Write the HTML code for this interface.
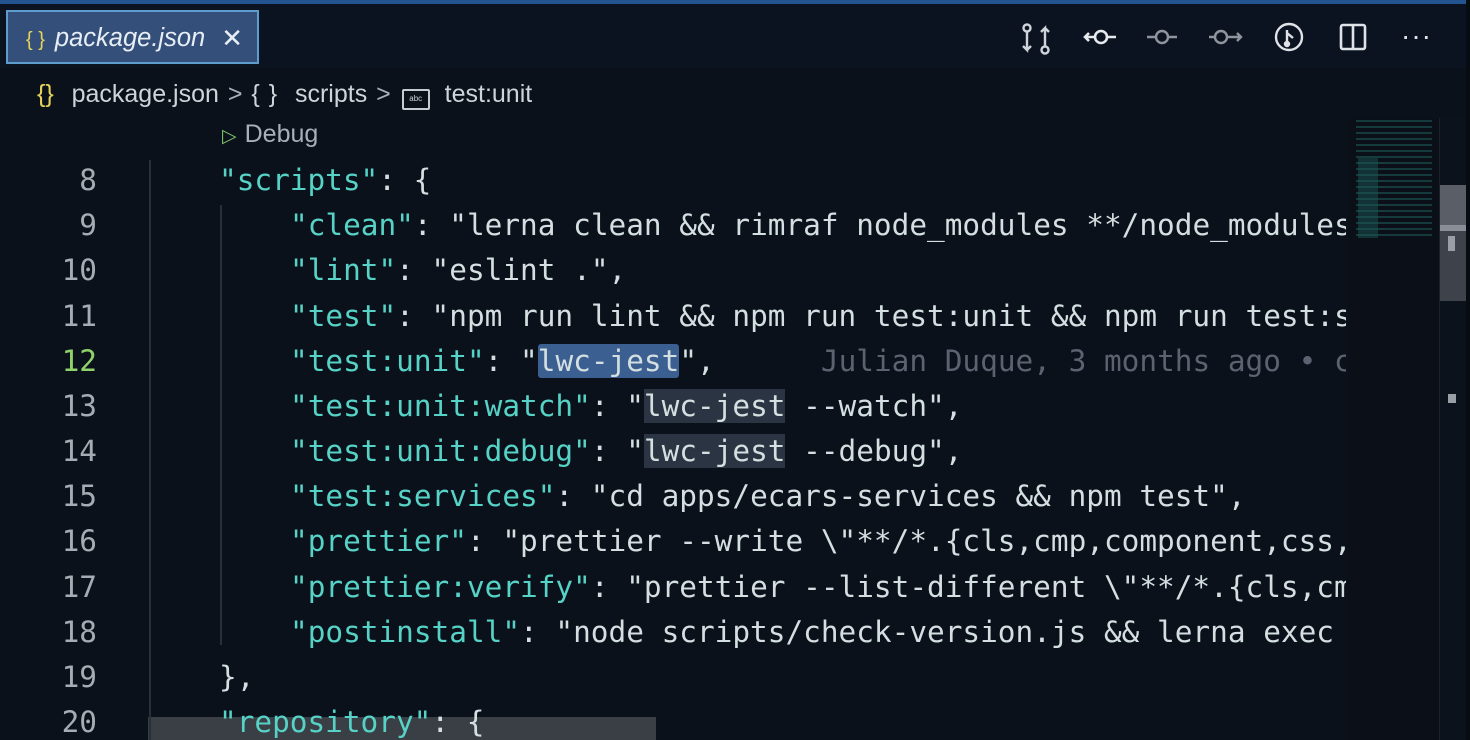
<!DOCTYPE html>
<html><head><meta charset="utf-8"><style>
*{margin:0;padding:0;box-sizing:border-box}
html,body{width:1470px;height:740px;overflow:hidden;background:#0b111b}
body{position:relative;font-family:"Liberation Sans",sans-serif}
.top{position:absolute;left:0;top:0;width:1470px;height:4px;background:#24548f}
.tabbar{position:absolute;left:0;top:4px;width:1470px;height:64px;background:#0c1320}
.tab{position:absolute;left:6px;top:10px;width:253px;height:54px;background:#34507a;border:2px solid #5d9ccc;color:#e8eef5;font-size:25.5px;font-style:italic;line-height:52px;padding-left:18px}
.tab .b{color:#e6d35a;font-style:normal;font-size:20px;margin-right:10px}
.tab .x{position:absolute;right:14px;top:0;font-style:normal;font-size:26px}
.crumb{position:absolute;left:0;top:68px;width:1470px;height:50px;background:#0b111b;color:#cfd4da;font-size:25px;line-height:52px;padding-left:37px;white-space:nowrap;word-spacing:2px}
.crumb .b{color:#e6d35a}
.crumb .g{color:#aab0b8}
.abc{display:inline-block;width:28px;height:21px;border:2px solid #c8ccd2;border-radius:2px;font-size:8px;line-height:16px;text-align:center;vertical-align:1px;margin:0 6px 0 2px}
.debug{position:absolute;left:222px;top:120px;color:#a8afb8;font-size:25px}
.debug span{color:#7cc46a;font-size:19px;margin-right:8px}
.clip{position:absolute;left:0;top:158px;width:1346px;height:582px;overflow:hidden}
.code{position:absolute;left:0;top:0;font-family:"DejaVu Sans Mono","Liberation Mono",monospace;font-size:29.4px;white-space:pre;color:#d3dfe0}
.ln{position:absolute;left:0;width:97px;text-align:right;color:#a6acb3;height:45.17px;line-height:45.17px}
.cl{position:absolute;left:219px;height:45.17px;line-height:45.17px}
.k{color:#56d3c6}
.sel{background:#3c5f92;border-radius:3px}
.hl{background:#2b3442}
.blame{color:#5c6370}
.guide{position:absolute;width:2px;background:#2a303a}
.mini{position:absolute;left:1348px;top:118px;width:92px;height:622px;background:#0a0f18}
.sb{position:absolute;left:1439px;top:118px;width:27px;height:622px;background:#0c121c;border-left:1px solid #1b212b}
.hs{position:absolute;left:148px;top:559px;width:508px;height:23px;background:#3a3e45}
.ico{position:absolute;top:22px}
</style></head><body>
<div class="top"></div>
<div class="tabbar"></div>
<div class="tab"><span class="b">{ }</span>package.json<span class="x">✕</span></div>
<svg class="ico" style="left:1018px" width="36" height="34" viewBox="0 0 36 34" fill="none" stroke="#cfd4da" stroke-width="2.4"><circle cx="9" cy="6" r="3.5"/><circle cx="27" cy="28" r="3.5"/><path d="M9 10v18l-4-4M9 28l4-4M27 24V6l-4 4M27 6l4 4"/></svg>
<svg class="ico" style="left:1082px" width="36" height="32" viewBox="0 0 36 32" fill="none" stroke="#e6eaee" stroke-width="2.6"><circle cx="19" cy="15" r="6"/><path d="M25 15h9M13 15H3M7 11l-4 4 4 4"/></svg>
<svg class="ico" style="left:1146px" width="32" height="32" viewBox="0 0 32 32" fill="none" stroke="#8f959d" stroke-width="2.4"><circle cx="16" cy="15" r="6"/><path d="M22 15h9M10 15H1"/></svg>
<svg class="ico" style="left:1208px" width="36" height="32" viewBox="0 0 36 32" fill="none" stroke="#8f959d" stroke-width="2.4"><circle cx="13" cy="15" r="6"/><path d="M7 15H1M19 15h14M29 11l4 4-4 4"/></svg>
<svg class="ico" style="left:1273px" width="32" height="32" viewBox="0 0 32 32" fill="none" stroke="#dfe3e8" stroke-width="2.4"><circle cx="16" cy="15" r="13"/><path d="M14 8v16M14 11l6 5"/><circle cx="14" cy="22" r="2" fill="#dfe3e8"/></svg>
<svg class="ico" style="left:1339px" width="28" height="32" viewBox="0 0 28 32" fill="none" stroke="#dfe3e8" stroke-width="2.6"><rect x="2" y="3" width="24" height="24" rx="2"/><path d="M14 3v24"/></svg>
<div style="position:absolute;left:1401px;top:20px;color:#dfe3e8;font-size:28px;letter-spacing:1px">···</div>
<div class="crumb"><span class="b">{}</span>&nbsp; package.json <span class="g">&gt;</span> { }&nbsp; scripts <span class="g">&gt;</span> <span class="abc">abc</span> test:unit</div>
<div class="debug"><span>▷</span>Debug</div>
<div class="clip">
<div class="hs"></div>
<div class="guide" style="left:149px;top:2px;height:580px"></div>
<div class="guide" style="left:220px;top:47px;height:440px"></div>
<div class="code">
<div class="ln" style="top:0">8</div><div class="cl" style="top:0"><span class="k">"scripts"</span>: {</div>
<div class="ln" style="top:45.17px">9</div><div class="cl" style="top:45.17px;left:290px"><span class="k">"clean"</span>: "lerna clean &amp;&amp; rimraf node_modules **/node_modules</div>
<div class="ln" style="top:90.34px">10</div><div class="cl" style="top:90.34px;left:290px"><span class="k">"lint"</span>: "eslint .",</div>
<div class="ln" style="top:135.5px">11</div><div class="cl" style="top:135.5px;left:290px"><span class="k">"test"</span>: "npm run lint &amp;&amp; npm run test:unit &amp;&amp; npm run test:s</div>
<div class="ln" style="top:180.7px;color:#8fd16a">12</div><div class="cl" style="top:180.7px;left:290px"><span class="k">"test:unit"</span>: "<span class="sel">lwc-jest</span>",      <span class="blame">Julian Duque, 3 months ago • c</span></div>
<div class="ln" style="top:225.9px">13</div><div class="cl" style="top:225.9px;left:290px"><span class="k">"test:unit:watch"</span>: "<span class="hl">lwc-jest</span> --watch",</div>
<div class="ln" style="top:271px">14</div><div class="cl" style="top:271px;left:290px"><span class="k">"test:unit:debug"</span>: "<span class="hl">lwc-jest</span> --debug",</div>
<div class="ln" style="top:316.2px">15</div><div class="cl" style="top:316.2px;left:290px"><span class="k">"test:services"</span>: "cd apps/ecars-services &amp;&amp; npm test",</div>
<div class="ln" style="top:361.4px">16</div><div class="cl" style="top:361.4px;left:290px"><span class="k">"prettier"</span>: "prettier --write \"**/*.{cls,cmp,component,css,</div>
<div class="ln" style="top:406.5px">17</div><div class="cl" style="top:406.5px;left:290px"><span class="k">"prettier:verify"</span>: "prettier --list-different \"**/*.{cls,cm</div>
<div class="ln" style="top:451.7px">18</div><div class="cl" style="top:451.7px;left:290px"><span class="k">"postinstall"</span>: "node scripts/check-version.js &amp;&amp; lerna exec</div>
<div class="ln" style="top:496.9px">19</div><div class="cl" style="top:496.9px">},</div>
<div class="ln" style="top:542px">20</div><div class="cl" style="top:542px"><span class="k">"repository"</span>: {</div>
</div>
</div>
<div class="mini">
<div style="position:absolute;left:8px;top:2px;width:76px;height:120px;background:repeating-linear-gradient(180deg,#1f5f5c 0 2px,transparent 2px 6px);opacity:.55"></div>
<div style="position:absolute;left:10px;top:40px;width:20px;height:80px;background:#1c5552;opacity:.5"></div>
</div>
<div class="sb">
<div style="position:absolute;left:0;top:67px;width:27px;height:40px;background:#5a5e66"></div>
<div style="position:absolute;left:0;top:107px;width:27px;height:6px;background:#8a8e95"></div>
<div style="position:absolute;left:0;top:113px;width:27px;height:70px;background:#3e424a"></div>
<div style="position:absolute;left:8px;top:118px;width:7px;height:15px;background:#9a9ea5"></div>
<div style="position:absolute;left:8px;top:276px;width:8px;height:9px;background:#9a9ea5"></div>
</div>
<div style="position:absolute;left:1466px;top:0;width:4px;height:740px;background:#070b12"></div>
</body></html>
